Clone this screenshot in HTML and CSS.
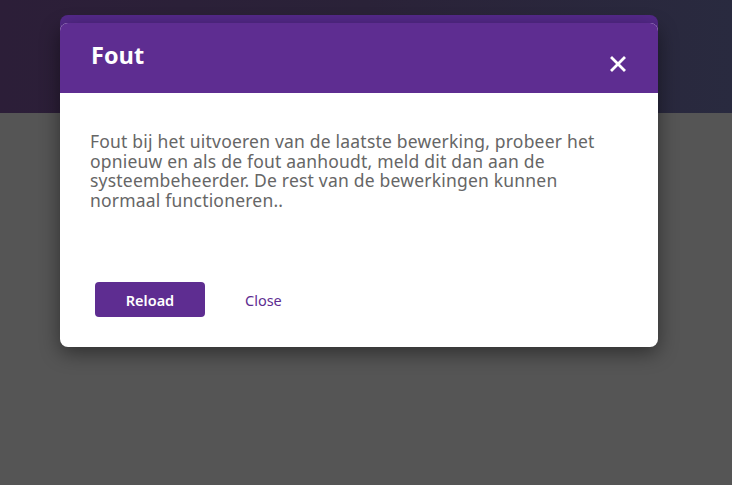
FILE: index.html
```html
<!DOCTYPE html>
<html lang="nl">
<head>
<meta charset="utf-8">
<title>Fout</title>
<link rel="stylesheet" href="styles.css">
</head>
<body>
<div class="page">
  <div class="topband"></div>
  <div class="main"></div>
</div>
<div class="dialog-stack">
  <div class="dialog-back"></div>
  <div class="dialog">
    <div class="dialog-header">
      <h1 class="dialog-title">Fout</h1>
      <button class="dialog-x" aria-label="Sluiten">
        <svg width="16" height="16" viewBox="0 0 16 16"><path d="M2 2L14 14M14 2L2 14" stroke="#fff" stroke-width="2.8" stroke-linecap="square" fill="none"/></svg>
      </button>
    </div>
    <div class="dialog-body">
      <p class="dialog-text">Fout bij het uitvoeren van de laatste bewerking, probeer het opnieuw en als de fout aanhoudt, meld dit dan aan de systeembeheerder. De rest van de bewerkingen kunnen normaal functioneren..</p>
      <div class="dialog-actions">
        <button class="btn-primary">Reload</button>
        <button class="btn-link">Close</button>
      </div>
    </div>
  </div>
</div>
</body>
</html>
```

FILE: styles.css
```css
html, body {
  margin: 0;
  padding: 0;
  height: 100%;
}
body {
  background: #555555;
  font-family: "Noto Sans", "Open Sans", sans-serif;
  overflow: hidden;
}
.page {
  display: flex;
  flex-direction: column;
  height: 100%;
}
.topband {
  height: 113px;
  background: linear-gradient(90deg, #2c1e38 0%, #2a2238 50%, #292a3f 100%);
}
.main {
  flex: 1;
  background: #555555;
}
.dialog-stack {
  position: absolute;
  top: 15px;
  left: 60px;
  width: 598px;
  display: flex;
  flex-direction: column;
}
.dialog-back {
  height: 16px;
  background: #54298a;
  border-radius: 8px 8px 0 0;
}
.dialog {
  margin-top: -8px;
  background: #fff;
  border-radius: 8px;
  overflow: hidden;
  box-shadow: 0 6px 20px rgba(0,0,0,0.45);
}
.dialog-header {
  height: 70px;
  background: #5e2d91;
  display: flex;
  align-items: center;
  justify-content: space-between;
  padding: 0 32px 0 31px;
}
.dialog-title {
  margin: 0;
  color: #fff;
  font-family: "Open Sans", sans-serif;
  font-weight: 700;
  font-size: 23.5px;
  line-height: 1;
  padding-bottom: 4px;
}
.dialog-x {
  border: 0;
  background: none;
  padding: 0;
  width: 16px;
  height: 16px;
  margin-top: 12px;
  display: flex;
  cursor: pointer;
}
.dialog-body {
  padding: 39px 30px 30px 30px;
}
.dialog-text {
  margin: 0;
  color: #666666;
  font-size: 17.5px;
  line-height: 19.5px;
  letter-spacing: 0.2px;
  font-weight: 400;
  max-width: 520px;
}
.dialog-actions {
  margin-top: 72px;
  display: flex;
  align-items: center;
  gap: 40px;
  padding-left: 5px;
}
.btn-primary {
  width: 110px;
  height: 35px;
  border: 0;
  border-radius: 4px;
  background: #5e2d91;
  color: #fff;
  font-family: "Noto Sans", sans-serif;
  font-size: 14.5px;
  font-weight: 600;
  cursor: pointer;
}
.btn-link {
  border: 0;
  background: none;
  padding: 0;
  color: #5e2d91;
  font-family: "Noto Sans", sans-serif;
  font-size: 14.5px;
  cursor: pointer;
}
```
